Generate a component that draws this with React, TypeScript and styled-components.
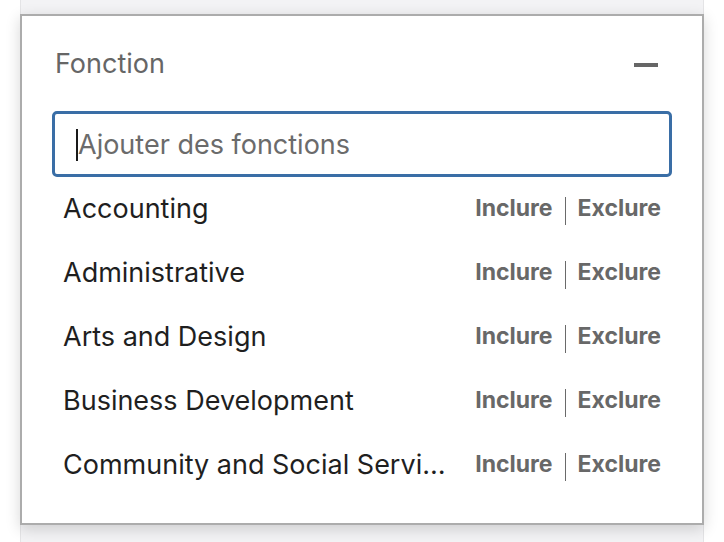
import React from "react";
import styled, { createGlobalStyle } from "styled-components";

const Global = createGlobalStyle`
  html, body { margin: 0; padding: 0; background: #ffffff; }
  body { font-family: Inter, "Noto Sans", sans-serif; -webkit-font-smoothing: antialiased; }
`;

const Page = styled.div`
  width: 724px;
  height: 542px;
  overflow: hidden;
  display: flex;
  flex-direction: column;
  padding: 0 20px;
  box-sizing: border-box;
`;

const Column = styled.div`
  flex: 1;
  display: flex;
  flex-direction: column;
  background: #f3f3f5;
  border-left: 1px solid #e4e4e6;
  border-right: 1px solid #e4e4e6;
`;

const TopStrip = styled.div`
  height: 14px;
  flex: none;
`;

const Card = styled.section`
  flex: none;
  margin: 0 -1px;
  background: #ffffff;
  border: 2px solid #acacac;
  box-shadow: 0 4px 14px rgba(0, 0, 0, 0.16);
  padding: 0 30px 26px;
  display: flex;
  flex-direction: column;
  position: relative;
  z-index: 1;
`;

const Header = styled.div`
  height: 95px;
  display: flex;
  align-items: center;
  justify-content: space-between;
  padding: 0 14px 0 3px;
`;

const Title = styled.h2`
  margin: 0;
  font-size: 27px;
  font-weight: 400;
  color: #666666;
`;

const Minus = styled.button`
  width: 24px;
  height: 4px;
  border: none;
  padding: 0;
  background: #666666;
  cursor: pointer;
  margin-top: 2px;
`;

const SearchBox = styled.div`
  height: 66px;
  box-sizing: border-box;
  border: 3px solid #3a6ea6;
  border-radius: 5px;
  display: flex;
  align-items: center;
  padding: 0 0 0 21px;
  position: relative;
`;

const Caret = styled.span`
  width: 2px;
  height: 32px;
  background: #1a1a1a;
  margin-top: 2px;
`;

const Placeholder = styled.span`
  font-size: 27px;
  color: #6b6b6b;
`;

const List = styled.ul`
  list-style: none;
  margin: 0;
  padding: 0;
`;

const Row = styled.li`
  height: 64px;
  display: flex;
  align-items: center;
  padding: 0 11px;
  gap: 26px;
`;

const Label = styled.span`
  flex: 1;
  min-width: 0;
  font-size: 27px;
  color: #1f1f1f;
  white-space: nowrap;
  overflow: hidden;
  text-overflow: ellipsis;
  margin-top: -2px;
`;

const Actions = styled.div`
  display: flex;
  align-items: center;
  flex: none;
`;

const Action = styled.button`
  border: none;
  background: none;
  padding: 0;
  font-family: inherit;
  font-size: 23px;
  font-weight: 700;
  color: #686868;
  cursor: pointer;
  margin-top: -2px;
`;

const Divider = styled.span`
  width: 1px;
  height: 28px;
  background: #6a6a6a;
  margin: 4px 12px 0;
`;

const items = [
  "Accounting",
  "Administrative",
  "Arts and Design",
  "Business Development",
  "Community and Social Services",
];

export default function App() {
  return (
    <>
      <Global />
      <Page>
        <Column>
          <TopStrip />
          <Card>
            <Header>
              <Title>Fonction</Title>
              <Minus aria-label="Réduire" />
            </Header>
            <SearchBox>
              <Caret />
              <Placeholder>Ajouter des fonctions</Placeholder>
            </SearchBox>
            <List>
              {items.map((it) => (
                <Row key={it}>
                  <Label title={it}>{it}</Label>
                  <Actions>
                    <Action>Inclure</Action>
                    <Divider />
                    <Action>Exclure</Action>
                  </Actions>
                </Row>
              ))}
            </List>
          </Card>
        </Column>
      </Page>
    </>
  );
}
